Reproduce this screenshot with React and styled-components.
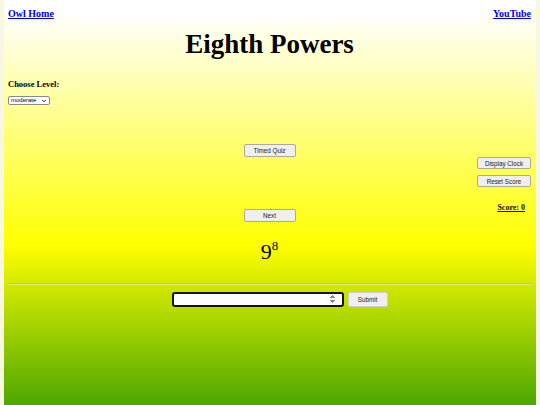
import React from 'react'
import styled, { createGlobalStyle } from 'styled-components'
import { ChevronDown } from 'lucide-react'

const GlobalStyle = createGlobalStyle`
  html {
    background: #f8f8e2;
  }
  body {
    margin: 0 4px;
    font-family: "Liberation Serif", "Times New Roman", serif;
  }
`

const Page = styled.div`
  min-height: 405px;
  box-sizing: border-box;
  padding: 8px 5px 0 4px;
  background: linear-gradient(to bottom, #ffffff 0px, #ffffff 12px, #ffff00 245px, #008000 475px);
  background-repeat: no-repeat;
`

const Header = styled.div`
  display: flex;
  justify-content: space-between;
  align-items: baseline;
  line-height: 12px;
`

const TopLink = styled.a`
  font-size: 10px;
  font-weight: bold;
  color: #0000ee;
  text-decoration: underline;
`

const Title = styled.h1`
  margin: 9px 0 19px;
  font-size: 27px;
  line-height: 31px;
  text-align: center;
  color: #000;
`

const LevelLabel = styled.div`
  font-size: 8.5px;
  font-weight: bold;
  line-height: 10px;
`

const SelectWrap = styled.div`
  position: relative;
  width: 42px;
  height: 9px;
  margin-top: 7px;

  svg {
    position: absolute;
    right: 3px;
    top: 1.5px;
    pointer-events: none;
  }
`

const LevelSelect = styled.select`
  appearance: none;
  display: block;
  box-sizing: border-box;
  width: 42px;
  height: 9px;
  margin: 0;
  padding: 0 0 0 2px;
  font-family: "Liberation Sans", Arial, sans-serif;
  font-size: 6px;
  line-height: 7px;
  border: 1px solid #8a8a8a;
  border-radius: 2px;
  background: #fff;
  color: #000;
`

const QuizArea = styled.div`
  display: grid;
  grid-template-columns: 1fr auto 1fr;
  margin-top: 39px;
`

const CenterCol = styled.div`
  display: flex;
  flex-direction: column;
  align-items: center;
`

const RightCol = styled.div`
  display: flex;
  flex-direction: column;
  align-items: flex-end;
  padding-top: 13px;
`

const Button = styled.button`
  box-sizing: border-box;
  width: ${p => p.$w || 52}px;
  height: ${p => p.$h || 13}px;
  margin-top: ${p => p.$mt || 0}px;
  padding: 0;
  font-family: "Liberation Sans", Arial, sans-serif;
  font-size: 6.3px;
  color: #222;
  background: #efefef;
  border: 1px solid ${p => p.$light ? '#cfcfcf' : '#aaaa98'};
  border-radius: 2px;
`

const Power = styled.div`
  margin-top: 18px;
  font-size: 22px;
  line-height: 24px;
  color: #000;

  sup {
    font-size: 13px;
    line-height: 0;
    vertical-align: 9px;
  }
`

const Score = styled.div`
  margin-top: 16px;
  margin-right: 6px;
  font-size: 8px;
  line-height: 10px;
  font-weight: bold;
  text-decoration: underline;
  color: #111;
`

const Divider = styled.hr`
  margin: 19px 0 0;
  height: 0;
  border: none;
  border-top: 1px solid #c2c488;
  border-bottom: 1px solid #e2ec70;
`

const AnswerRow = styled.div`
  display: flex;
  justify-content: center;
  gap: 4px;
  margin-top: 7px;
  padding-left: 20px;
`

const AnswerInput = styled.input`
  box-sizing: border-box;
  width: 172px;
  height: 15px;
  padding: 0 2px;
  border: 2px solid #151515;
  border-radius: 3px;
  background: #fff;
  font-size: 8px;
  outline: none;

  &::-webkit-inner-spin-button {
    opacity: 1;
    height: 11px;
  }
`

export default function App() {
  return (
    <>
      <GlobalStyle />
      <Page>
        <Header>
          <TopLink href="#">Owl Home</TopLink>
          <TopLink href="#">YouTube</TopLink>
        </Header>
        <Title>Eighth Powers</Title>
        <LevelLabel>Choose Level:</LevelLabel>
        <SelectWrap>
          <LevelSelect defaultValue="moderate">
            <option value="easy">easy</option>
            <option value="moderate">moderate</option>
            <option value="hard">hard</option>
          </LevelSelect>
          <ChevronDown size={6} strokeWidth={4} color="#222" />
        </SelectWrap>
        <QuizArea>
          <div />
          <CenterCol>
            <Button>Timed Quiz</Button>
            <Button $mt={52}>Next</Button>
            <Power>9<sup>8</sup></Power>
          </CenterCol>
          <RightCol>
            <Button $w={54} $h={12}>Display Clock</Button>
            <Button $w={54} $h={12} $mt={6}>Reset Score</Button>
            <Score>Score: 0</Score>
          </RightCol>
        </QuizArea>
        <Divider />
        <AnswerRow>
          <AnswerInput type="number" />
          <Button $w={40} $h={15} $light>Submit</Button>
        </AnswerRow>
      </Page>
    </>
  )
}
